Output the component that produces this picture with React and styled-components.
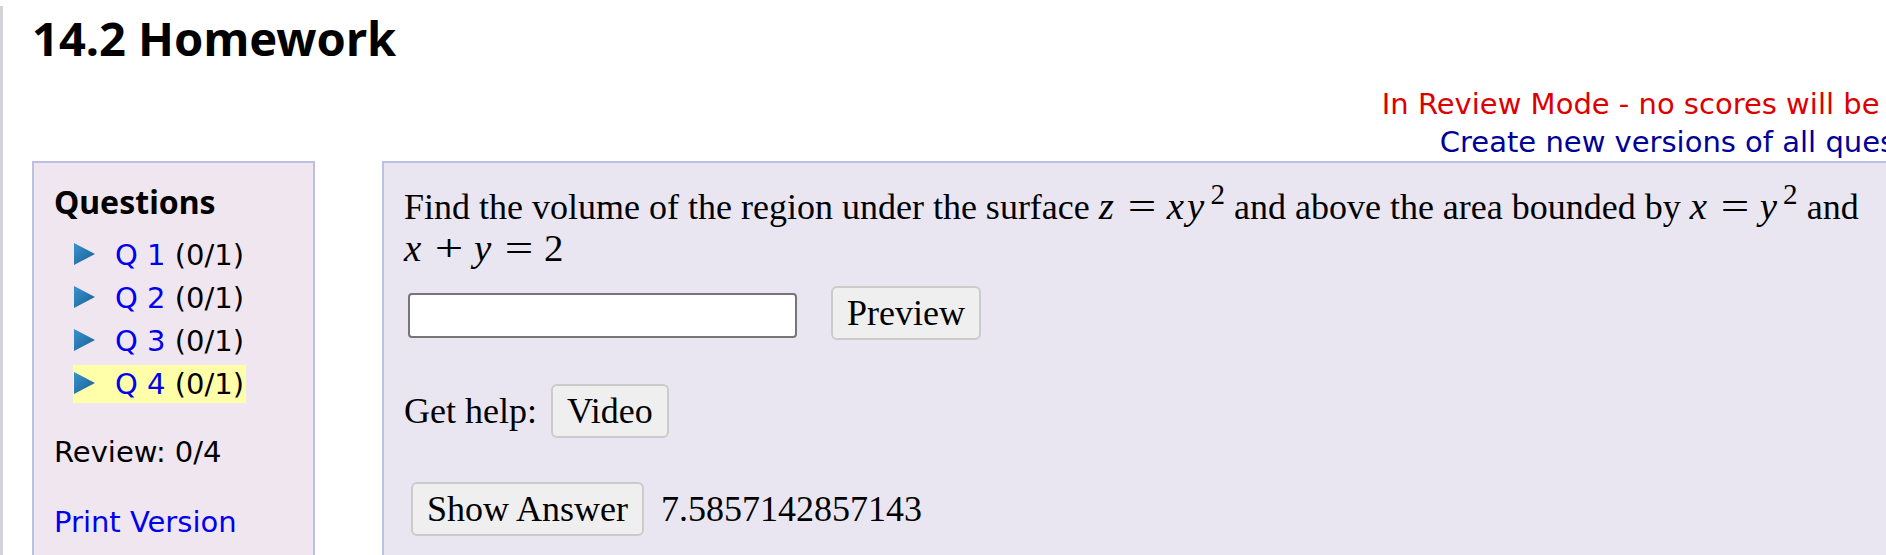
import React from "react";
import styled, { createGlobalStyle } from "styled-components";

const GlobalStyle = createGlobalStyle`
  html, body {
    margin: 0;
    padding: 0;
    overflow: hidden;
    background: #ffffff;
  }
  body {
    font-family: "DejaVu Sans", Verdana, sans-serif;
    color: #000;
  }
`;

const Page = styled.div`
  width: 1943px;
  min-height: 555px;
  border-left: 3px solid #d3d3da;
  padding-left: 29px;
`;

const Title = styled.h1`
  margin: 6px 0 0;
  font-family: "Noto Sans", "DejaVu Sans", sans-serif;
  font-weight: 700;
  font-size: 47px;
  line-height: 64px;
  color: #000;
`;

const Notice = styled.div`
  margin-top: 15px;
  display: flex;
  flex-direction: column;
  align-items: flex-end;
  font-size: 29px;
  line-height: 38px;
  white-space: nowrap;
`;

const ReviewNote = styled.span`
  color: #dd0000;
`;

const RegenLink = styled.a`
  color: #000099;
  text-decoration: none;
`;

const Main = styled.div`
  display: flex;
  align-items: stretch;
  gap: 67px;
`;

const Panel = styled.div`
  box-sizing: border-box;
  min-height: 430px;
  border: 2px solid #bcc0e2;
  padding: 20px;
`;

const Sidebar = styled(Panel)`
  width: 283px;
  background: #f0e6f0;
`;

const SideHeading = styled.h3`
  margin: -2px 0 0;
  font-family: "Noto Sans", "DejaVu Sans", sans-serif;
  font-weight: 700;
  font-size: 32px;
  line-height: 42px;
`;

const QList = styled.ul`
  list-style: none;
  margin: 13px 0 0;
  padding: 0;
  font-size: 29px;
  line-height: normal;
`;

const QItem = styled.li`
  display: flex;
  align-items: baseline;
  width: fit-content;
  margin: 0 0 5px 19px;
  padding: 2px 2px 2px 1px;
  background: ${(p) => (p.$current ? "#ffffaa" : "transparent")};
  &:last-child {
    margin-bottom: 0;
  }
`;

const Arrow = styled.svg`
  width: 21px;
  height: 22px;
  margin-right: 20px;
  flex: none;
`;

const QLink = styled.a`
  color: #0000ee;
  text-decoration: none;
  margin-right: 0.318em;
`;

const SideText = styled.p`
  margin: ${(p) => p.$top}px 0 0;
  font-size: 29px;
  line-height: normal;
`;

const PrintLink = styled.a`
  color: #0000ee;
  text-decoration: none;
`;

const QuestionPanel = styled(Panel)`
  width: 1520px;
  background: #e9e6f2;
  font-family: "Liberation Serif", "Times New Roman", serif;
  font-size: 36px;
  line-height: normal;
`;

const QText = styled.p`
  margin: 3px 0 0;
`;

const MathSpan = styled.span`
  white-space: nowrap;
  font-family: "Liberation Serif", "Times New Roman", serif;
  font-size: 1.08em;
  line-height: 1;
`;

const V = styled.i`
  font-style: italic;
  padding-right: 0.08em;
`;

const Op = styled.span`
  display: inline-block;
  width: 0.778em;
  margin: 0 0.25em;
  text-align: center;
  transform: scaleX(1.3);
`;

const Sup = styled.sup`
  font-size: 0.75em;
  vertical-align: 0;
  position: relative;
  top: -0.5em;
  margin-left: 0.1em;
`;

const AnswerRow = styled.div`
  display: flex;
  align-items: flex-end;
  gap: 34px;
  margin-top: 16px;
`;

const AnswerInput = styled.input`
  box-sizing: border-box;
  width: 389px;
  height: 45px;
  margin: 0 0 2px 4px;
  border: 2px solid #767676;
  border-radius: 4px;
  background: #fff;
  font-size: 28px;
  padding: 0 6px;
`;

const Button = styled.button`
  box-sizing: border-box;
  font-family: "Liberation Serif", "Times New Roman", serif;
  font-size: 36px;
  line-height: normal;
  color: #000;
  background: #efefef;
  border: 2px solid #cbcbcb;
  border-radius: 6px;
  padding: 4px 14px;
  margin: 0;
  margin-left: ${(p) => p.$indent || 0}px;
  cursor: pointer;
`;

const HelpRow = styled.div`
  display: flex;
  align-items: center;
  gap: 14px;
  margin-top: 44px;
`;

const ShowRow = styled.div`
  display: flex;
  align-items: center;
  gap: 17px;
  margin-top: 44px;
`;

function Triangle() {
  return (
    <Arrow viewBox="0 0 21 22" aria-hidden="true">
      <defs>
        <linearGradient id="triGrad" x1="0" y1="0" x2="1" y2="1">
          <stop offset="0" stopColor="#3a93cf" />
          <stop offset="0.55" stopColor="#2677ad" />
          <stop offset="1" stopColor="#1a5f8f" />
        </linearGradient>
      </defs>
      <polygon points="0,0 21,11 0,22" fill="url(#triGrad)" />
    </Arrow>
  );
}

const questions = [
  { n: 1, score: "(0/1)" },
  { n: 2, score: "(0/1)" },
  { n: 3, score: "(0/1)" },
  { n: 4, score: "(0/1)", current: true },
];

export default function App() {
  return (
    <>
      <GlobalStyle />
      <Page>
        <Title>14.2 Homework</Title>
        <Notice>
          <ReviewNote>In Review Mode - no scores will be saved</ReviewNote>
          <RegenLink href="#">Create new versions of all questions.</RegenLink>
        </Notice>
        <Main>
          <Sidebar>
            <SideHeading>Questions</SideHeading>
            <QList>
              {questions.map((q) => (
                <QItem key={q.n} $current={q.current}>
                  <Triangle />
                  <QLink href="#">Q {q.n}</QLink>
                  <span>{q.score}</span>
                </QItem>
              ))}
            </QList>
            <SideText $top={32}>Review: 0/4</SideText>
            <SideText $top={36}>
              <PrintLink href="#">Print Version</PrintLink>
            </SideText>
          </Sidebar>
          <QuestionPanel>
            <QText>
              Find the volume of the region under the surface{" "}
              <MathSpan>
                <V>z</V>
                <Op>=</Op>
                <V>x</V>
                <V>y</V>
                <Sup>2</Sup>
              </MathSpan>{" "}
              and above the area bounded by{" "}
              <MathSpan>
                <V>x</V>
                <Op>=</Op>
                <V>y</V>
                <Sup>2</Sup>
              </MathSpan>{" "}
              and{" "}
              <MathSpan>
                <V>x</V>
                <Op>+</Op>
                <V>y</V>
                <Op>=</Op>
                <span>2</span>
              </MathSpan>
            </QText>
            <AnswerRow>
              <AnswerInput type="text" aria-label="answer" />
              <Button type="button">Preview</Button>
            </AnswerRow>
            <HelpRow>
              <span>Get help:</span>
              <Button type="button">Video</Button>
            </HelpRow>
            <ShowRow>
              <Button type="button" $indent={7}>
                Show Answer
              </Button>
              <span>7.5857142857143</span>
            </ShowRow>
          </QuestionPanel>
        </Main>
      </Page>
    </>
  );
}
